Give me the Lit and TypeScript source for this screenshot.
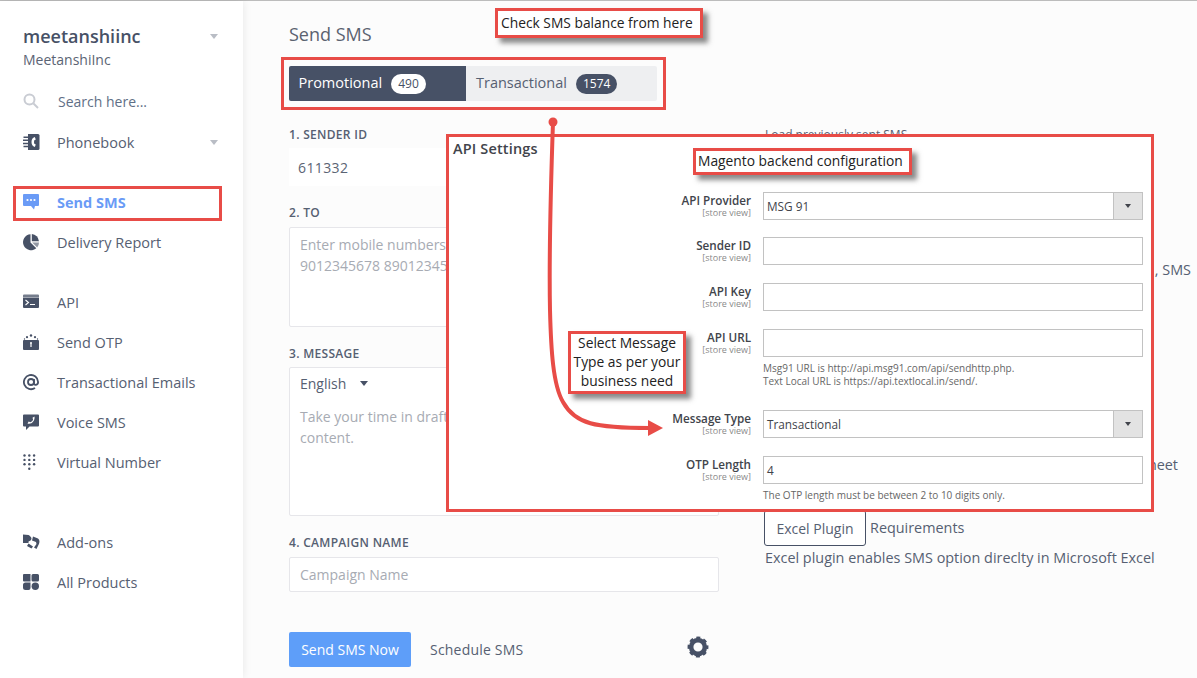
import { LitElement, html, css, svg } from "lit";
import { customElement } from "lit/decorators.js";

const ICONS: Record<string, unknown> = {
  phonebook: svg`<path d="M5 0h10a1.500 1.500 0 0 1 1.500 1.500v13A1.500 1.500 0 0 1 15 16H5z"/><path d="M.5 2.500h5v1.500h-5zM0 5.500h5.500V7H0zM0 8.700h5.500v1.500H0zM.5 11.800h5v1.500h-5z"/><path fill="#fff" d="M11.800 3c-2.200.6-3.300 2.600-3.300 5s1.100 4.400 3.300 5l1-2.400-1.500-.8c-.4-1.200-.4-2.400 0-3.600l1.500-.8z"/>`,
  chat: svg`<path d="M1 0h14a1 1 0 0 1 1 1v10a1 1 0 0 1-1 1h-3l-1 3.500-3-3.500H1a1 1 0 0 1-1-1V1a1 1 0 0 1 1-1z"/><g fill="#fff"><circle cx="4.500" cy="6" r="1.100"/><circle cx="8" cy="6" r="1.100"/><circle cx="11.500" cy="6" r="1.100"/></g>`,
  pie: svg`<path d="M7.500.2v8.200l5.800 5.800A8 8 0 1 1 7.500.2z"/><path d="M8.800 0a8 8 0 0 1 7.200 7.200H8.800z"/><path opacity=".6" d="M9.200 8.500H16a8 8 0 0 1-1.800 5z"/>`,
  api: svg`<path opacity=".75" d="M1 .5h14a1 1 0 0 1 1 1V3H0V1.500a1 1 0 0 1 1-1z"/><path d="M0 3.500h16V13a1 1 0 0 1-1 1H1a1 1 0 0 1-1-1z"/><path fill="none" stroke="#fff" stroke-width="1.100" d="M2.500 6l3 2.500-3 2.500M7 10.500h5"/>`,
  otp: svg`<rect x="0" y="6" width="16" height="10" rx="1"/><circle cx="8" cy="1.500" r="1.200"/><circle cx="4" cy="3.200" r="1.100"/><circle cx="12" cy="3.200" r="1.100"/><circle cx="1.500" cy="5" r=".7"/><circle cx="14.500" cy="5" r=".7"/><path fill="#fff" d="M7 9a1 1 0 1 1 2 0c0 .4-.2.700-.4.900V13H7.400V9.900C7.200 9.700 7 9.400 7 9z"/>`,
  at: svg`<g fill="none" stroke="currentColor" stroke-width="1.800"><circle cx="8" cy="8" r="3"/><path d="M11 5v4.200c0 2.500 4.100 2.300 4.100-1.200A7.100 7.100 0 1 0 12 14"/></g>`,
  voice: svg`<path d="M1 .5h14a1 1 0 0 1 1 1v10a1 1 0 0 1-1 1H6.500L3 16v-3.500H1a1 1 0 0 1-1-1v-10a1 1 0 0 1 1-1z"/><path fill="#fff" d="M11.500 2.500L9.500 3.700l.6 1.800c-.5 1.300-1.400 2.200-2.700 2.700L5.700 7.500 4.500 9.500c4 1.200 7.700-2.600 7-7z"/>`,
  dial: svg`<g><circle cx="1.500" cy="1.500" r="1.200"/><circle cx="6.300" cy="1.500" r="1.200"/><circle cx="11.100" cy="1.500" r="1.200"/><circle cx="1.500" cy="5.900" r="1.200"/><circle cx="6.300" cy="5.900" r="1.200"/><circle cx="11.100" cy="5.900" r="1.200"/><circle cx="1.500" cy="10.300" r="1.200"/><circle cx="6.300" cy="10.300" r="1.200"/><circle cx="11.100" cy="10.300" r="1.200"/><circle cx="6.300" cy="14.700" r="1.200"/></g>`,
  addons: svg`<path d="M0 .5l5.500.5c1 .5 3 2 3 3.500S7 7 5.500 7.500V9H0z"/><path d="M10 2.500l5 2c2 1.500 1.700 4 .7 6L13.500 15 11 13.500l2.500-3.500-.5-2-4-1.500zM5.500 9.500L10 12.500l-1.500 2L4 12z"/>`,
  apps: svg`<path d="M0 1a1 1 0 0 1 1-1h6.500v7.500H1a1 1 0 0 1-1-1zM8.500 1.500A1.500 1.500 0 0 1 10 0h4.500A1.500 1.500 0 0 1 16 1.500v4.500a1.500 1.500 0 0 1-1.500 1.500H10A1.500 1.500 0 0 1 8.500 6zM2.500 8.500h5V14a2 2 0 0 1-2 2h-3a2.500 2.500 0 0 1-2.500-2.500V11a2.500 2.500 0 0 1 2.500-2.500z"/><circle cx="12.300" cy="12.300" r="3.700"/>`,
};

const icon = (n: string) => html`<svg class="ic" viewBox="0 0 17 17" fill="currentColor">${ICONS[n]}</svg>`;

@customElement("app-root")
export class AppRoot extends LitElement {
  static styles = css`
    :host { display: block; width: 1197px; height: 678px; position: relative; overflow: hidden;
      font-family: "Open Sans", sans-serif; color: #475166; background: #fcfcfc; }
    * { box-sizing: border-box; }
    .page { display: flex; height: 678px; border-top: 1px solid #bcbcbc; }
    .side { width: 243px; flex: none; background: #fff; box-shadow: 0 0 9px rgba(0,0,0,.09); padding: 23px 0 0 23px; z-index: 1; }
    .acct { display: flex; justify-content: space-between; width: 195px; height: 25px; }
    .acct b { font-size: 18px; font-weight: 600; line-height: 24px; color: #475166; }
    .sub { font-size: 14px; line-height: 22px; color: #5b6474; }
    .caret { width: 0; height: 0; border: 4.500px solid transparent; border-top: 5px solid #b9bdc5; border-bottom: 0; margin-top: 10px; }
    .search { display: flex; align-items: center; height: 40px; margin: 10px 0 1px; font-size: 14px; color: #5f6f86; }
    .search svg { width: 16px; height: 16px; margin-right: 19px; flex: none; }
    .nav { display: flex; align-items: center; height: 40px; width: 195px; font-size: 14.500px; color: #566072; }
    .nav .ic { width: 17px; height: 17px; margin-right: 17px; color: #475166; flex: none; }
    .nav .grow { flex: 1; }
    .nav.on { color: #6a9bf6; font-weight: 700; }
    .nav.on .ic { color: #6a9bf6; }
    .gap1 { margin-top: 20px; } .gap2 { margin-top: 40px; }
    .main { flex: 1; padding: 20px 0 0 46px; min-width: 0; }
    h1 { font-size: 18px; font-weight: 400; line-height: 26px; margin: 0 0 19px; color: #5a6270; }
    .tabs { display: flex; width: 368px; height: 35px; border-radius: 2px; background: #eeeff1; font-size: 14.500px; line-height: 33px; overflow: hidden; }
    .tab { display: flex; align-items: flex-start; padding-left: 10px; gap: 9px; }
    .tab.a { width: 177px; background: #475166; color: #fff; padding-left: 9.500px; }
    .tab.b { color: #566072; }
    .pill { border-radius: 11px; height: 20px; line-height: 20px; padding: 0 7px; font-size: 12px; margin-top: 8px; }
    .a .pill { background: #fff; color: #475166; } .b .pill { background: #475166; color: #fff; }
    .cols { display: grid; grid-template-columns: 430px 1fr; column-gap: 46px; margin-top: 26px; }
    .lbl { font-size: 12px; font-weight: 600; line-height: 16px; color: #566072; letter-spacing: .3px; }
    .sid { height: 38px; margin: 5px 0 19px; padding-left: 9px; display: flex; align-items: center; background: #fff; font-size: 14px; color: #5b6474; letter-spacing: .4px; }
    .box { border: 1px solid #e6e6ea; background: #fff; border-radius: 2px; padding: 6px 10px; font-size: 14px; line-height: 21px; color: #a7abb3; }
    .ta { height: 100px; margin: 6px 0 19px; }
    .msg { height: 149px; margin-top: 5px; }
    .lang { color: #566072; display: flex; align-items: center; gap: 14px; height: 18px; margin-bottom: 14px; }
    .lang i { width: 0; height: 0; border: 4.500px solid transparent; border-top: 5px solid #475166; border-bottom: 0; }
    .lbl4 { margin-top: 19px; }
    .cn { height: 35px; margin-top: 6px; display: flex; align-items: center; padding: 0 10px; }
    .acts { display: flex; align-items: center; margin-top: 40px; width: 430px; }
    .send { width: 122px; height: 35px; display: flex; align-items: center; justify-content: center; background: #5e9ef9; color: #fff; border-radius: 2px; font-size: 14px; }
    .sch { margin-left: 19px; font-size: 14px; color: #566072; flex: 1; letter-spacing: .2px; }
    .gear { width: 22px; height: 22px; margin: 0 10px 6px 0; color: #475166; }
    .right { font-size: 14.400px; color: #566072; }
    .r1 { line-height: 16px; font-size: 12px; }
    .r2 { line-height: 20px; margin-top: 117px; text-align: right; padding-right: 6px; white-space: nowrap; }
    .r3 { line-height: 20px; margin-top: 175px; text-align: right; padding-right: 19px; white-space: nowrap; }
    .plug { display: flex; align-items: flex-start; gap: 4px; margin-top: 35px; line-height: 35px; }
    .xl { width: 102px; height: 36px; margin-left: -1px; padding-top: 2px; border: 1px solid #475166; border-radius: 3px; display: flex; align-items: center; justify-content: center; background: #fff; font-size: 14px; line-height: 20px; }
    .r4 { margin-top: 1px; line-height: 22px; }

    .panel { position: absolute; left: 446px; top: 134px; width: 708px; height: 378px; background: #fff; border: 3px solid #e84c47; padding: 2px 8px 0 4px; z-index: 2; color: #333; }
    .panel h2 { margin: 0; font-size: 14.500px; font-weight: 600; line-height: 20px; color: #41444b; height: 52.700px; letter-spacing: .15px; }
    .row { display: grid; grid-template-columns: 298px 380px; column-gap: 12px; margin-bottom: 17.700px; }
    .k { text-align: right; font-size: 11.700px; font-weight: 600; line-height: 14px; color: #41444b; padding-top: 1px; }
    .k small { display: block; font-size: 9px; font-weight: 400; line-height: 11px; color: #8a8a8a; }
    .c { height: 28px; border: 1px solid #c2c2c2; font-size: 11.800px; color: #41444b; display: flex; align-items: center; padding-left: 3px; background: #fff; }
    .c .v { flex: 1; }
    .dd { width: 29px; height: 26px; background: #e3e3e3; border-left: 1px solid #c2c2c2; display: flex; align-items: center; justify-content: center; }
    .dd i { width: 0; height: 0; border: 3.500px solid transparent; border-top: 4px solid #41444b; border-bottom: 0; }
    .note { font-size: 10px; line-height: 13px; color: #666; margin-top: 5px; }
    .row.n { margin-bottom: 22.200px; }

    .call { position: absolute; background: #fff; border: 3px solid #e84c47; box-shadow: 5px 5px 5px rgba(60,60,60,.6); color: #222; font-size: 13.800px; line-height: 19px; z-index: 4; display: flex; align-items: center; padding: 0 0 2px 3px; white-space: nowrap; }
    .c1 { left: 495px; top: 8px; width: 208px; height: 30px; }
    .c2 { left: 693px; top: 148px; width: 219px; height: 27px; padding-left: 2px; }
    .c3 { left: 568px; top: 331px; width: 118px; height: 63px; justify-content: center; text-align: center; padding: 0 0 2px; }
    .ring { position: absolute; border: 3px solid #e84c47; z-index: 3; pointer-events: none; }
    .rtabs { left: 281px; top: 57px; width: 385px; height: 53px; }
    .rnav { left: 13px; top: 186px; width: 209px; height: 35px; }
    .arrow { position: absolute; left: 540px; top: 110px; width: 130px; height: 335px; z-index: 3; }
  `;

  private nav(i: string, t: string, cls = "", caret = false) {
    return html`<div class="nav ${cls}">${icon(i)}<span class="grow">${t}</span>${caret ? html`<span class="caret" style="margin-top:0"></span>` : ""}</div>`;
  }

  private row(k: string, v: string, dd = false, note: unknown = "") {
    return html`<div class="row ${note ? "n" : ""}">
      <div class="k">${k}<small>[store view]</small></div>
      <div><div class="c"><span class="v">${v}</span>${dd ? html`<span class="dd"><i></i></span>` : ""}</div>${note ? html`<div class="note">${note}</div>` : ""}</div>
    </div>`;
  }

  render() {
    return html`
      <div class="page">
        <aside class="side">
          <div class="acct"><b>meetanshiinc</b><span class="caret"></span></div>
          <div class="sub">MeetanshiInc</div>
          <div class="search"><svg viewBox="0 0 16 16" fill="none" stroke="#c9ccd3" stroke-width="2"><circle cx="6.500" cy="6.500" r="5"/><path d="M10.500 10.500L15 15"/></svg>Search here...</div>
          ${this.nav("phonebook", "Phonebook", "", true)}
          <div class="gap1">${this.nav("chat", "Send SMS", "on")}</div>
          ${this.nav("pie", "Delivery Report")}
          <div class="gap1">${this.nav("api", "API")}</div>
          ${this.nav("otp", "Send OTP")}
          ${this.nav("at", "Transactional Emails")}
          ${this.nav("voice", "Voice SMS")}
          ${this.nav("dial", "Virtual Number")}
          <div class="gap2">${this.nav("addons", "Add-ons")}</div>
          ${this.nav("apps", "All Products")}
        </aside>
        <main class="main">
          <h1>Send SMS</h1>
          <div class="tabs">
            <div class="tab a">Promotional <span class="pill">490</span></div>
            <div class="tab b">Transactional <span class="pill">1574</span></div>
          </div>
          <div class="cols">
            <div>
              <div class="lbl">1. SENDER ID</div>
              <div class="sid">611332</div>
              <div class="lbl">2. TO</div>
              <div class="box ta">Enter mobile numbers here<br />9012345678 8901234567</div>
              <div class="lbl">3. MESSAGE</div>
              <div class="box msg"><div class="lang">English <i></i></div>Take your time in drafting your<br />content.</div>
              <div class="lbl lbl4">4. CAMPAIGN NAME</div>
              <div class="box cn">Campaign Name</div>
              <div class="acts">
                <div class="send">Send SMS Now</div>
                <div class="sch">Schedule SMS</div>
                <svg class="gear" viewBox="0 0 24 24" fill="none" stroke="currentColor"><circle cx="12" cy="12" r="7.500" stroke-width="5"/><circle cx="12" cy="12" r="9.800" stroke-width="3.200" stroke-dasharray="4.200 3.500" stroke-dashoffset="2.100"/></svg>
              </div>
            </div>
            <div class="right">
              <div class="r1">Load previously sent SMS</div>
              <div class="r2">, SMS</div>
              <div class="r3">Sheet</div>
              <div class="plug"><span class="xl">Excel Plugin</span> Requirements</div>
              <div class="r4">Excel plugin enables SMS option direclty in Microsoft Excel</div>
            </div>
          </div>
        </main>
      </div>

      <section class="panel">
        <h2>API Settings</h2>
        ${this.row("API Provider", "MSG 91", true)}
        ${this.row("Sender ID", "")}
        ${this.row("API Key", "")}
        ${this.row("API URL", "", false, html`Msg91 URL is http://api.msg91.com/api/sendhttp.php.<br />Text Local URL is https://api.textlocal.in/send/.`)}
        ${this.row("Message Type", "Transactional", true)}
        ${this.row("OTP Length", "4", false, "The OTP length must be between 2 to 10 digits only.")}
      </section>

      <div class="ring rtabs"></div>
      <div class="ring rnav"></div>
      <svg class="arrow" viewBox="540 110 130 335" fill="none">
        <circle cx="553" cy="122" r="4.500" fill="#e84c47"/>
        <path d="M553 122C551 180 549 260 550 310C551 350 553 385 563 402C575 424 595 428 650 428" stroke="#e84c47" stroke-width="4"/>
        <path d="M648 420L663 428L648 436Z" fill="#e84c47"/>
      </svg>
      <div class="call c1">Check SMS balance from here</div>
      <div class="call c2">Magento backend configuration</div>
      <div class="call c3"><span>Select Message<br />Type as per your<br />business need</span></div>
    `;
  }
}
